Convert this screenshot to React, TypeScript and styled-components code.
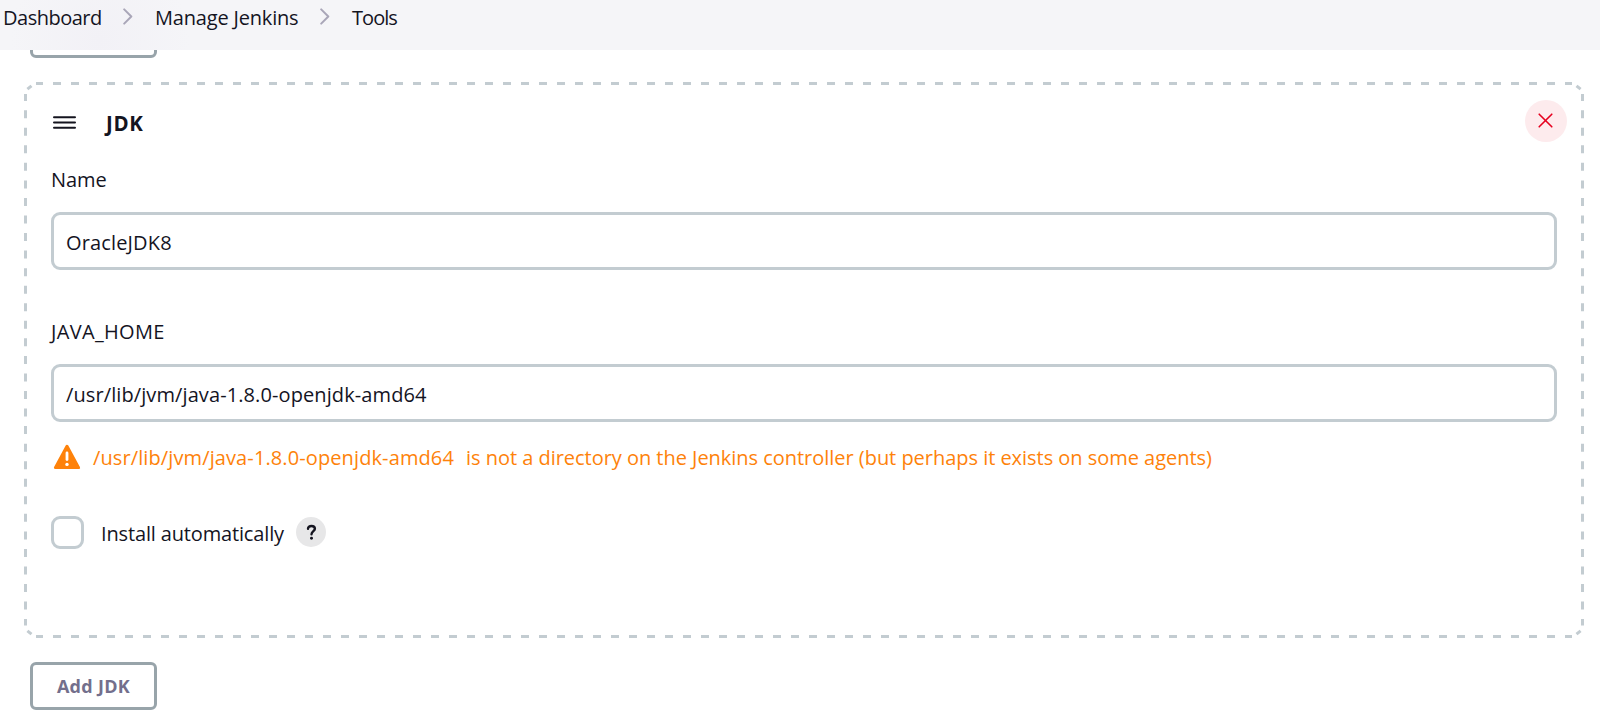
import React from "react";
import styled, { createGlobalStyle } from "styled-components";

const ink = "#14141f";
const borderColor = "#c3ccd1";
const buttonBorder = "#98a4aa";
const warning = "#fe820a";

const GlobalStyle = createGlobalStyle`
  *, *::before, *::after { box-sizing: border-box; }
  body {
    margin: 0;
    background: #fff;
    color: ${ink};
    font-family: "Open Sans", "Noto Sans", sans-serif;
    font-size: 20px;
    line-height: 28px;
    overflow: hidden;
  }
`;

const Text = styled.span<{ $tracking?: number }>`
  letter-spacing: ${(p) => p.$tracking ?? 0}px;
  white-space: pre;
`;

const Page = styled.div`
  display: flex;
  flex-direction: column;
  height: 724px;
`;

const Breadcrumbs = styled.nav`
  display: flex;
  align-items: flex-start;
  height: 50px;
  padding: 4px 0 0 3px;
  background: radial-gradient(circle at 100px 40px, #f2f1f6 0, #f5f5f8 90px);
`;

const Crumb = styled(Text)<{ $width: number }>`
  width: ${(p) => p.$width}px;
`;

const Separator = styled.svg`
  width: 10px;
  height: 17px;
  margin: 4px 22px 0 20px;
`;

const ScrolledButtonEdge = styled.div`
  display: flex;
  align-items: flex-end;
  height: 8px;
  padding-left: 30px;
  overflow: hidden;
`;

const AddButton = styled.button`
  flex: none;
  width: 127px;
  height: 48px;
  padding: 0 0 1px;
  border: 3px solid ${buttonBorder};
  border-radius: 6px;
  background: transparent;
  color: #736f8c;
  font: 700 18px/28px "Open Sans", "Noto Sans", sans-serif;
`;

const Card = styled.section`
  position: relative;
  width: 1560px;
  height: 556px;
  margin: 24px 0 0 24px;
  padding: 18px 17px 0 27px;
`;

const DashedOutline = styled.svg`
  position: absolute;
  top: 0;
  left: 0;
  pointer-events: none;
`;

const CardHeader = styled.header`
  display: flex;
  align-items: center;
  height: 42px;
`;

const DragHandle = styled.svg`
  width: 23px;
  height: 15px;
  margin: 3px 30px 0 2px;
`;

const Title = styled.h2`
  flex: 1;
  margin: 3px 0 0;
  font-size: 20.5px;
  font-weight: 700;
  line-height: 28px;
`;

const DeleteButton = styled.button`
  display: grid;
  place-items: center;
  width: 42px;
  height: 42px;
  padding: 0 1px 1px 0;
  border: 0;
  border-radius: 50%;
  background: #fdebed;
`;

const Field = styled.div<{ $gap: number }>`
  display: flex;
  flex-direction: column;
  gap: 18px;
  width: 1506px;
  margin-top: ${(p) => p.$gap}px;
`;

const Input = styled.div`
  height: 58px;
  padding: 14px 12px 0;
  border: 3px solid ${borderColor};
  border-radius: 9px;
`;

const Warning = styled.div`
  display: flex;
  align-items: flex-start;
  margin-top: 22px;
  color: ${warning};
`;

const WarningIcon = styled.svg`
  width: 28px;
  height: 26px;
  margin: 0 12px 0 2px;
`;

const WarningPath = styled(Text)`
  width: 373px;
`;

const InstallRow = styled.div`
  display: flex;
  align-items: center;
  margin-top: 44px;
  height: 33px;
`;

const Checkbox = styled.div`
  width: 33px;
  height: 33px;
  border: 3px solid ${borderColor};
  border-radius: 9px;
`;

const InstallLabel = styled(Text)`
  width: 195px;
  margin: 3px 0 0 17px;
`;

const HelpBadge = styled.span`
  display: grid;
  place-items: center;
  width: 30px;
  height: 30px;
  margin-bottom: 1px;
  border-radius: 50%;
  background: #e7e7e8;
`;

const Actions = styled.div`
  padding: 24px 0 0 30px;
`;

const Chevron = () => (
  <Separator viewBox="0 0 10 17" fill="none" stroke="#a9a6b8" strokeWidth="2" strokeLinecap="round" strokeLinejoin="round">
    <path d="M1.2 1.4 8.3 8.5 1.2 15.6" />
  </Separator>
);

const Outline = () => (
  <DashedOutline width="1560" height="556" fill="none" stroke={borderColor} strokeWidth="3">
    <path d="M12 1.5H19M29 1.5H1541M1541 1.5H1548" strokeDasharray="8 10" />
    <path d="M12 554.5H19M29 554.5H1541M1541 554.5H1548" strokeDasharray="8 10" />
    <path d="M1.5 12V19M1.5 28.2V537M1.5 537V543.5" strokeDasharray="8 9.55" />
    <path d="M1558.5 12V19M1558.5 28.2V537M1558.5 537V543.5" strokeDasharray="8 9.55" />
    <path d="M3.4 7.2 7.5 3.8M1556.6 7.2 1552.5 3.8M3.4 548.8 7.5 552.2M1556.6 548.8 1552.5 552.2" />
  </DashedOutline>
);

export default function App() {
  return (
    <Page>
      <GlobalStyle />
      <Breadcrumbs>
        <Crumb $width={100} $tracking={-0.5}>Dashboard</Crumb>
        <Chevron />
        <Crumb $width={145} $tracking={-0.18}>Manage Jenkins</Crumb>
        <Chevron />
        <Crumb $width={60} $tracking={-0.95}>Tools</Crumb>
      </Breadcrumbs>
      <ScrolledButtonEdge>
        <AddButton aria-hidden="true" />
      </ScrolledButtonEdge>
      <Card>
        <Outline />
        <CardHeader>
          <DragHandle viewBox="0 0 23 15" stroke={ink} strokeWidth="2" strokeLinecap="round">
            <path d="M1 2.2H22M1 7.5H22M1 12.8H22" />
          </DragHandle>
          <Title><Text $tracking={0.7}>JDK</Text></Title>
          <DeleteButton aria-label="Delete">
            <svg width="15" height="15" viewBox="0 0 15 15" stroke="#e6001f" strokeWidth="1.6" strokeLinecap="round">
              <path d="M1.2 1.2 13.8 13.8M13.8 1.2 1.2 13.8" />
            </svg>
          </DeleteButton>
        </CardHeader>
        <Field $gap={24}>
          <Text $tracking={-0.1}>Name</Text>
          <Input><Text $tracking={0.15}>OracleJDK8</Text></Input>
        </Field>
        <Field $gap={48}>
          <Text $tracking={0.33}>JAVA_HOME</Text>
          <Input><Text $tracking={0.1}>/usr/lib/jvm/java-1.8.0-openjdk-amd64</Text></Input>
        </Field>
        <Warning>
          <WarningIcon viewBox="0 0 28 26">
            <path d="M14 2.2 25.6 23.6H2.4Z" fill={warning} stroke={warning} strokeWidth="3" strokeLinejoin="round" />
            <path d="M14 9V15.6" stroke="#fff" strokeWidth="2.8" strokeLinecap="round" />
            <circle cx="14" cy="20.4" r="1.7" fill="#fff" />
          </WarningIcon>
          <WarningPath $tracking={0.11}>/usr/lib/jvm/java-1.8.0-openjdk-amd64</WarningPath>
          <Text $tracking={-0.03}>is not a directory on the Jenkins controller (but perhaps it exists on some agents)</Text>
        </Warning>
        <InstallRow>
          <Checkbox role="checkbox" aria-checked="false" />
          <InstallLabel $tracking={-0.15}>Install automatically</InstallLabel>
          <HelpBadge>
            <svg width="11" height="17" viewBox="0 0 12 18" fill="none" stroke={ink} strokeWidth="2.6" strokeLinecap="round" strokeLinejoin="round">
              <path d="M2.2 5C2.2 3 3.8 1.9 5.9 1.9S9.7 3.1 9.7 5C9.7 7.6 6 7.6 6 11" />
              <circle cx="6" cy="15.3" r="1.6" fill={ink} stroke="none" />
            </svg>
          </HelpBadge>
        </InstallRow>
      </Card>
      <Actions>
        <AddButton><Text $tracking={0.3}>Add JDK</Text></AddButton>
      </Actions>
    </Page>
  );
}
